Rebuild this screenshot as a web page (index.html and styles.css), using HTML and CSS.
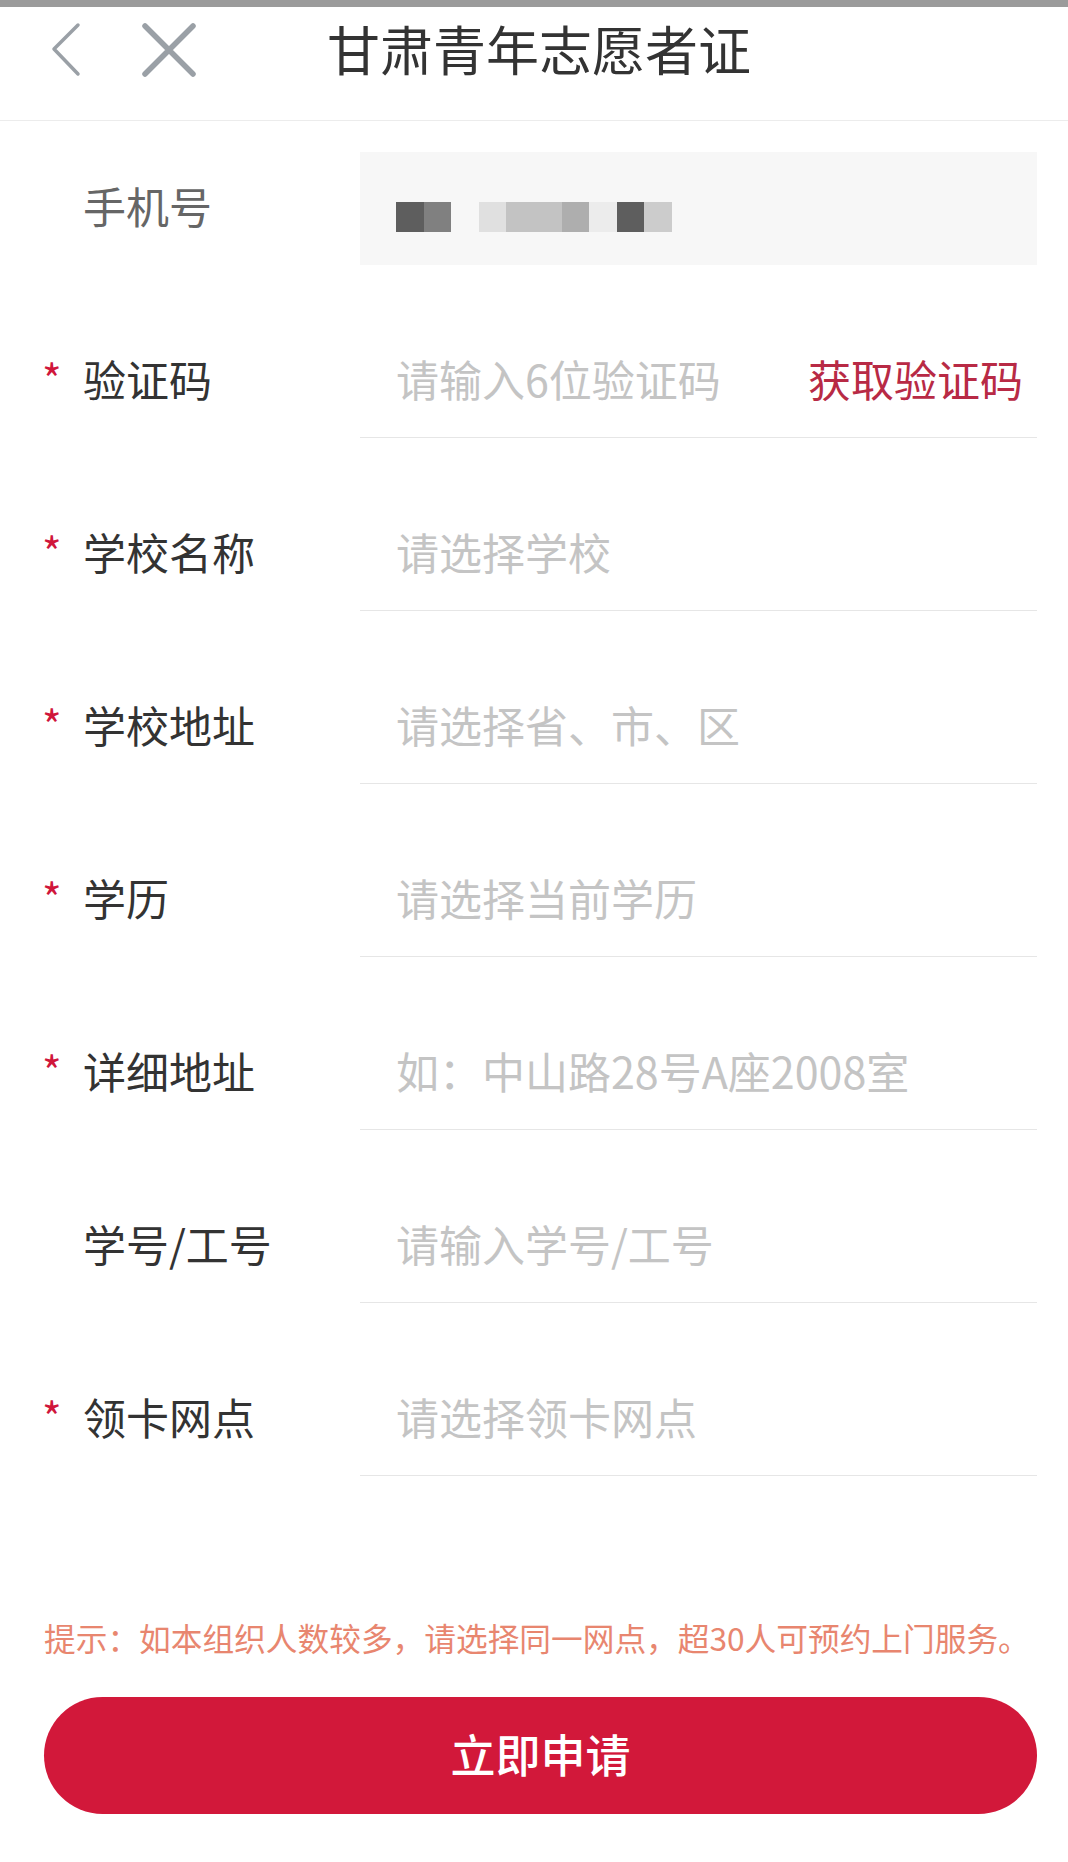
FILE: index.html
```html
<!DOCTYPE html>
<html lang="zh-CN">
<head>
<meta charset="utf-8">
<title>甘肃青年志愿者证</title>
<link rel="stylesheet" href="styles.css">
</head>
<body>
<div class="topbar"></div>
<header class="header">
  <div class="header-row">
    <div class="nav">
      <svg class="ic-back" width="32" height="56" viewBox="0 0 32 56"><path d="M28 3 L4 27 L28 52" fill="none" stroke="#9aa0a6" stroke-width="3.5" stroke-linecap="round" stroke-linejoin="round"/></svg>
      <svg class="ic-close" width="56" height="56" viewBox="0 0 56 56"><path d="M4 4 L52 52 M52 4 L4 52" fill="none" stroke="#9aa0a6" stroke-width="5.5" stroke-linecap="round"/></svg>
    </div>
    <h1 class="title">甘肃青年志愿者证</h1>
    <div></div>
  </div>
</header>

<main class="form">
  <div class="row row-phone">
    <div class="label muted"><span class="star"></span>手机号</div>
    <div class="field field-gray">
      <div class="mosaic">
        <i class="b b1"></i><i class="b b2"></i><i class="b b0"></i><i class="b b3"></i><i class="b b4"></i><i class="b b4"></i><i class="b b5"></i><i class="b b6"></i><i class="b b1"></i><i class="b b7"></i>
      </div>
    </div>
  </div>

  <div class="row">
    <div class="label"><span class="star">*</span>验证码</div>
    <div class="field"><span class="ph">请输入6位验证码</span><span class="code">获取验证码</span></div>
  </div>
  <div class="row">
    <div class="label"><span class="star">*</span>学校名称</div>
    <div class="field"><span class="ph">请选择学校</span></div>
  </div>
  <div class="row">
    <div class="label"><span class="star">*</span>学校地址</div>
    <div class="field"><span class="ph">请选择省、市、区</span></div>
  </div>
  <div class="row">
    <div class="label"><span class="star">*</span>学历</div>
    <div class="field"><span class="ph">请选择当前学历</span></div>
  </div>
  <div class="row">
    <div class="label"><span class="star">*</span>详细地址</div>
    <div class="field"><span class="ph">如：中山路28号A座2008室</span></div>
  </div>
  <div class="row">
    <div class="label"><span class="star"></span>学号/工号</div>
    <div class="field"><span class="ph">请输入学号/工号</span></div>
  </div>
  <div class="row">
    <div class="label"><span class="star">*</span>领卡网点</div>
    <div class="field"><span class="ph">请选择领卡网点</span></div>
  </div>

  <p class="hint">提示：如本组织人数较多，请选择同一网点，超30人可预约上门服务。</p>
  <button class="submit" type="button">立即申请</button>
</main>
</body>
</html>
```
FILE: styles.css
```css
* { box-sizing: border-box; }
html, body { margin: 0; padding: 0; background: #fff; }
body {
  width: 1068px;
  min-height: 1862px;
  font-family: "Noto Sans CJK SC", "Noto Sans", sans-serif;
  color: #333;
}
.topbar { height: 7px; background: #9b9b9b; }
.header {
  height: 114px;
  border-bottom: 1px solid #ececec;
}
.header-row {
  height: 82px;
  display: grid;
  grid-template-columns: 1fr auto 1fr;
  align-items: center;
}
.nav {
  display: flex;
  align-items: center;
  padding-left: 50px;
  gap: 59px;
  margin-top: 4px;
}
.ic-back, .ic-close { display: block; }
.title {
  margin: 0;
  padding-left: 10px;
  font-size: 53px;
  font-weight: 400;
  color: #333;
  line-height: 1;
  letter-spacing: 0;
}

.form { padding: 0 31px 0 44px; }
.row { display: flex; align-items: center; margin-top: 64px; }
.row-phone { margin-top: 31px; }
.label {
  width: 316px;
  display: flex;
  align-items: center;
  font-size: 43px;
  line-height: 1;
  color: #333;
  padding-bottom: 10px;
}
.label.muted { color: #666; padding-bottom: 6px; }
.star {
  width: 39px;
  flex: none;
  color: #d0163b;
  font-size: 42px;
  line-height: 1;
  position: relative;
  top: -1px;
  left: -2px;
}
.field {
  flex: 1;
  height: 109px;
  border-bottom: 1px solid #e6e6e6;
  display: flex;
  align-items: center;
  justify-content: space-between;
  padding: 0 14px 10px 36px;
  font-size: 43px;
  line-height: 1;
}
.field-gray {
  height: 113px;
  background: #f7f7f7;
  border-bottom: none;
  justify-content: flex-start;
  padding-bottom: 0;
}
.ph { color: #c4c4c4; }
.code { color: #b82a45; }
.mosaic { display: flex; margin-top: 17px; }
.b { display: block; width: 27.6px; height: 30px; }
.b0 { background: #f7f7f7; }
.b1 { background: #5e5e5e; }
.b2 { background: #808080; }
.b3 { background: #e0e0e0; }
.b4 { background: #c3c3c3; }
.b5 { background: #aeaeae; }
.b6 { background: #ececec; }
.b7 { background: #cccccc; }

.hint {
  margin: 141px 0 0 0;
  font-size: 31.7px;
  line-height: 40px;
  color: #e8866f;
  white-space: nowrap;
}
.submit {
  display: block;
  width: 993px;
  height: 117px;
  margin-top: 40px;
  border: none;
  border-radius: 59px;
  background: #d2183a;
  color: #fff;
  font-family: "Noto Sans CJK SC", "Noto Sans", sans-serif;
  font-size: 45px;
  font-weight: 500;
  line-height: 1;
  padding: 0 0 4px 0;
}
```
